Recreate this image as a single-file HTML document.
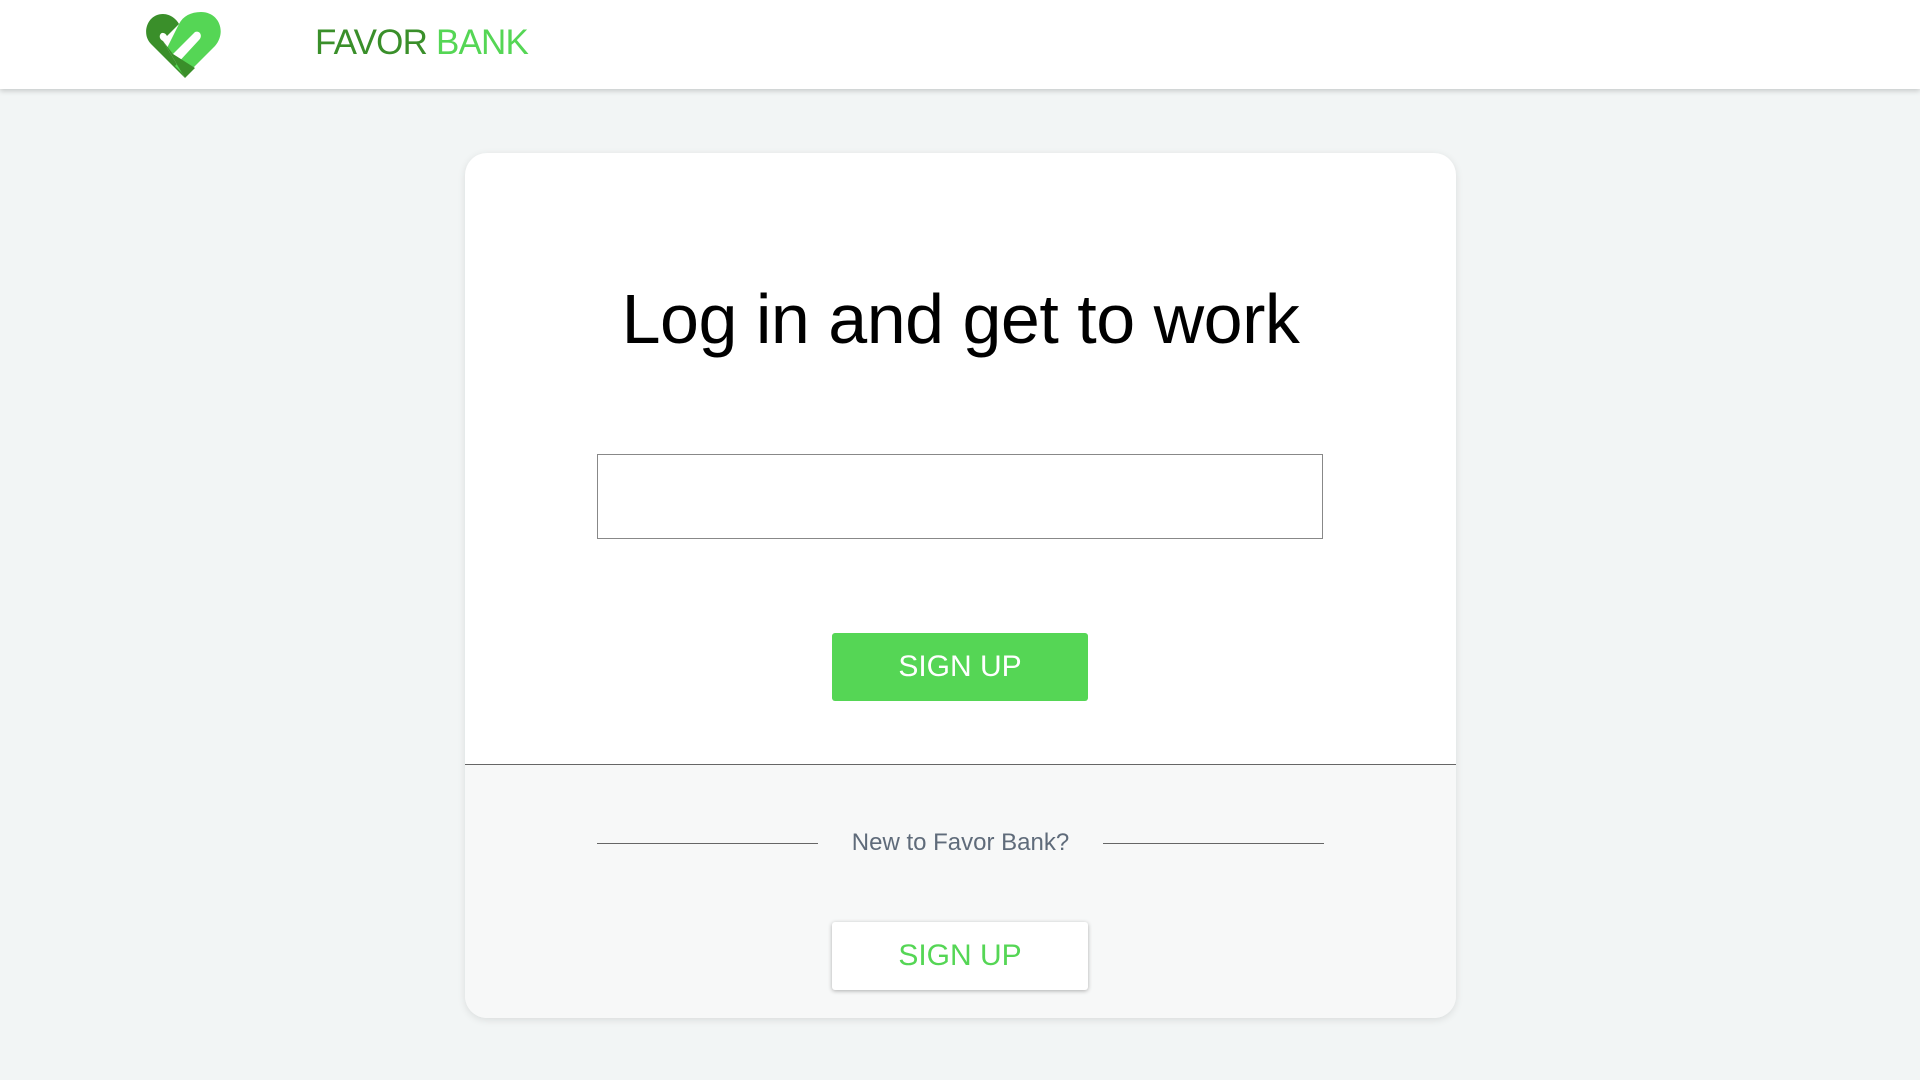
<!DOCTYPE html>
<html><head><meta charset="utf-8"><style>
*{margin:0;padding:0;box-sizing:border-box}
body{width:1920px;height:1080px;background:#f2f5f5;font-family:"Liberation Sans",sans-serif;position:relative;overflow:hidden}
.hdr{position:absolute;left:0;top:0;width:1920px;height:89px;background:#fff;box-shadow:0 2px 5px rgba(0,0,0,.18)}
.logo{position:absolute;left:145px;top:10px}
.brand{position:absolute;left:315px;top:23px;font-size:35px;color:#3a8f2a;letter-spacing:-0.8px}
.brand span{color:#55d655}
.card{position:absolute;left:465px;top:153px;width:991px;height:865px;background:#fff;border-radius:22px;box-shadow:0 2px 8px rgba(0,0,0,.1);overflow:hidden}
h1{position:absolute;left:0;width:991px;top:126px;text-align:center;font-weight:normal;font-size:70px;color:#000;letter-spacing:-0.5px}
.inp{position:absolute;left:132px;top:301px;width:726px;height:85px;border:1px solid #888}
.btn{position:absolute;left:367px;width:256px;height:68px;border-radius:3px;text-align:center;line-height:68px;font-size:30px}
.b1{top:480px;background:#55d655;color:#fff}
.low{position:absolute;left:0;top:611px;width:991px;height:254px;background:#f7f8f8;border-top:1px solid #666}
.ln{position:absolute;top:78px;height:1px;background:#666}
.nt{position:absolute;left:0;width:991px;top:64px;text-align:center;font-size:24px;color:#5f6b7a}
.b2{top:769px;background:#fff;color:#55d655;box-shadow:0 1px 4px rgba(0,0,0,.3)}
</style></head><body>
<div class="hdr">
<svg class="logo" width="80" height="70" viewBox="0 0 80 70">
<path d="M40 68 L6 34 C-4 24 2 4 18 4 C26 4 32 10 34 14 L22 26 C20 22 16 22 15 25 C14 28 16 30 18 31 Z" fill="#3a8f2a"/>
<path d="M34 14 C38 6 46 2 56 2 C74 2 82 22 70 36 L40 66 L30 56 L54 30 C58 26 55 20 50 22 L28 44 L22 38 Z" fill="#55d655"/>
<path d="M18 31 L40 68 L50 58 L28 44 Z" fill="#3a8f2a"/>
</svg>
<div class="brand">FAVOR <span>BANK</span></div>
</div>
<div class="card">
<h1>Log in and get to work</h1>
<div class="inp"></div>
<div class="btn b1">SIGN UP</div>
<div class="low">
<div class="ln" style="left:132px;width:221px"></div>
<div class="ln" style="left:638px;width:221px"></div>
<div class="nt">New to Favor Bank?</div>
</div>
<div class="btn b2" style="top:769px">SIGN UP</div>
</div>
</body></html>
